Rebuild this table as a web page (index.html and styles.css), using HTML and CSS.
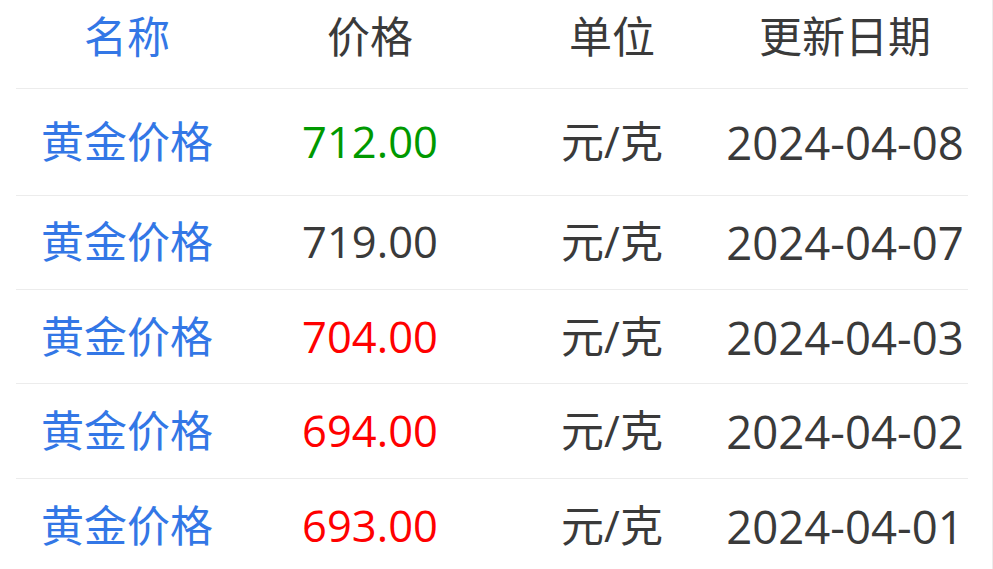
FILE: index.html
```html
<!DOCTYPE html>
<html lang="zh-CN">
<head>
<meta charset="utf-8">
<title>黄金价格</title>
<link rel="stylesheet" href="styles.css">
</head>
<body>
<div class="page">
  <table class="price-table">
    <colgroup>
      <col class="c1"><col class="c2"><col class="c3"><col class="c4">
    </colgroup>
    <thead>
      <tr>
        <th class="name">名称</th>
        <th>价格</th>
        <th>单位</th>
        <th>更新日期</th>
      </tr>
    </thead>
    <tbody>
      <tr class="first">
        <td class="name">黄金价格</td>
        <td class="price up">712.00</td>
        <td>元/克</td>
        <td class="date">2024-04-08</td>
      </tr>
      <tr>
        <td class="name">黄金价格</td>
        <td class="price">719.00</td>
        <td>元/克</td>
        <td class="date">2024-04-07</td>
      </tr>
      <tr>
        <td class="name">黄金价格</td>
        <td class="price down">704.00</td>
        <td>元/克</td>
        <td class="date">2024-04-03</td>
      </tr>
      <tr>
        <td class="name">黄金价格</td>
        <td class="price down">694.00</td>
        <td>元/克</td>
        <td class="date">2024-04-02</td>
      </tr>
      <tr>
        <td class="name">黄金价格</td>
        <td class="price down">693.00</td>
        <td>元/克</td>
        <td class="date">2024-04-01</td>
      </tr>
    </tbody>
  </table>
</div>
</body>
</html>
```

FILE: styles.css
```css
html, body {
  margin: 0;
  padding: 0;
  background: #fff;
}
body {
  font-family: "Open Sans", "Noto Sans CJK SC", sans-serif;
  color: #3a3a3a;
  overflow: hidden;
}
.page {
  box-sizing: content-box;
  width: 952px;
  height: 569px;
  padding-left: 16px;
  padding-right: 24px;
  border-right: 1px solid #ececec;
}
.price-table {
  width: 952px;
  border-collapse: collapse;
  table-layout: fixed;
  font-size: 43px;
}
.c1 { width: 222px; }
.c2 { width: 264px; }
.c3 { width: 220px; }
.c4 { width: 246px; }
.price-table th,
.price-table td {
  text-align: center;
  font-weight: normal;
  padding: 0;
  line-height: 60px;
  white-space: nowrap;
}
.price-table th {
  height: 88px;
  padding-bottom: 14px;
  box-sizing: border-box;
  vertical-align: middle;
}
.price-table td {
  border-top: 1px solid #ececec;
  height: 94.4px;
  box-sizing: border-box;
}
.price-table tr.first td {
  height: 107px;
}
.price-table td.date {
  font-size: 45.5px;
}
.price-table td.price {
  font-size: 43.5px;
}
.name { color: #3377e6; }
.up { color: #009900; }
.down { color: #ff0000; }
```
